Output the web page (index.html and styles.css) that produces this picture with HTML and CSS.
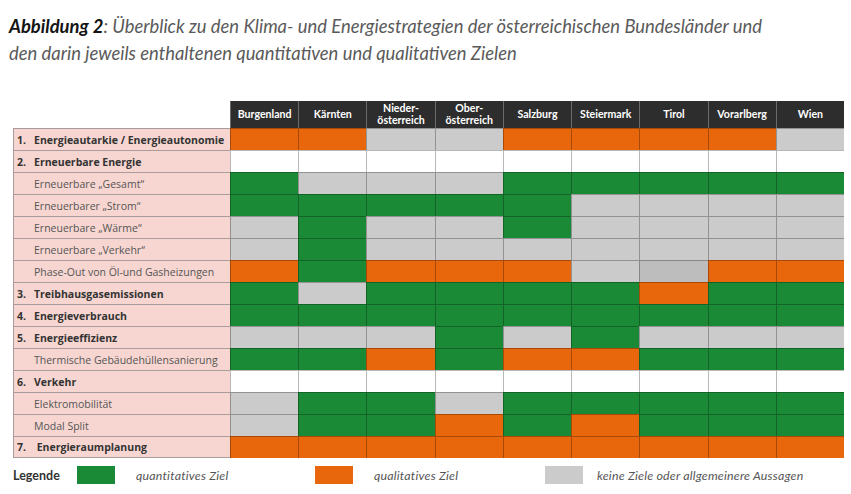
FILE: index.html
```html
<!DOCTYPE html>
<html lang="de">
<head>
<meta charset="utf-8">
<title>Abbildung 2</title>
<link rel="stylesheet" href="styles.css">
</head>
<body>
<p class="caption"><span class="caption-label">Abbildung 2</span>: Überblick zu den Klima- und Energiestrategien der österreichischen Bundesländer und<br>den darin jeweils enthaltenen quantitativen und qualitativen Zielen</p>

<div class="matrix">
  <div class="corner"></div>
  <div class="head">Burgenland</div>
  <div class="head">Kärnten</div>
  <div class="head two">Nieder-<br>österreich</div>
  <div class="head two">Ober-<br>österreich</div>
  <div class="head">Salzburg</div>
  <div class="head">Steiermark</div>
  <div class="head">Tirol</div>
  <div class="head">Vorarlberg</div>
  <div class="head">Wien</div>

  <div class="label main"><span class="num">1.</span>Energieautarkie / Energieautonomie</div>
  <div class="c o"></div><div class="c o"></div><div class="c y"></div><div class="c y"></div><div class="c o"></div><div class="c o"></div><div class="c o"></div><div class="c o"></div><div class="c y"></div>

  <div class="label main"><span class="num">2.</span>Erneuerbare Energie</div>
  <div class="c w"></div><div class="c w"></div><div class="c w"></div><div class="c w"></div><div class="c w"></div><div class="c w"></div><div class="c w"></div><div class="c w"></div><div class="c w"></div>

  <div class="label sub">Erneuerbare „Gesamt“</div>
  <div class="c g"></div><div class="c y"></div><div class="c y"></div><div class="c y"></div><div class="c g"></div><div class="c g"></div><div class="c g"></div><div class="c g"></div><div class="c g"></div>

  <div class="label sub">Erneuerbarer „Strom“</div>
  <div class="c g"></div><div class="c g"></div><div class="c g"></div><div class="c g"></div><div class="c g"></div><div class="c y"></div><div class="c y"></div><div class="c y"></div><div class="c y"></div>

  <div class="label sub">Erneuerbare „Wärme“</div>
  <div class="c y"></div><div class="c g"></div><div class="c y"></div><div class="c y"></div><div class="c g"></div><div class="c y"></div><div class="c y"></div><div class="c y"></div><div class="c y"></div>

  <div class="label sub">Erneuerbare „Verkehr“</div>
  <div class="c y"></div><div class="c g"></div><div class="c y"></div><div class="c y"></div><div class="c y"></div><div class="c y"></div><div class="c y"></div><div class="c y"></div><div class="c y"></div>

  <div class="label sub">Phase-Out von Öl-und Gasheizungen</div>
  <div class="c o"></div><div class="c g"></div><div class="c o"></div><div class="c o"></div><div class="c o"></div><div class="c y"></div><div class="c yd"></div><div class="c o"></div><div class="c o"></div>

  <div class="label main"><span class="num">3.</span>Treibhausgasemissionen</div>
  <div class="c g"></div><div class="c y"></div><div class="c g"></div><div class="c g"></div><div class="c g"></div><div class="c g"></div><div class="c o"></div><div class="c g"></div><div class="c g"></div>

  <div class="label main"><span class="num">4.</span>Energieverbrauch</div>
  <div class="c g"></div><div class="c g"></div><div class="c g"></div><div class="c g"></div><div class="c g"></div><div class="c g"></div><div class="c g"></div><div class="c g"></div><div class="c g"></div>

  <div class="label main"><span class="num">5.</span>Energieeffizienz</div>
  <div class="c y"></div><div class="c y"></div><div class="c y"></div><div class="c g"></div><div class="c y"></div><div class="c g"></div><div class="c y"></div><div class="c y"></div><div class="c y"></div>

  <div class="label sub">Thermische Gebäudehüllensanierung</div>
  <div class="c g"></div><div class="c g"></div><div class="c o"></div><div class="c g"></div><div class="c o"></div><div class="c o"></div><div class="c g"></div><div class="c g"></div><div class="c g"></div>

  <div class="label main"><span class="num">6.</span>Verkehr</div>
  <div class="c w"></div><div class="c w"></div><div class="c w"></div><div class="c w"></div><div class="c w"></div><div class="c w"></div><div class="c w"></div><div class="c w"></div><div class="c w"></div>

  <div class="label sub">Elektromobilität</div>
  <div class="c y"></div><div class="c g"></div><div class="c g"></div><div class="c y"></div><div class="c g"></div><div class="c g"></div><div class="c g"></div><div class="c g"></div><div class="c g"></div>

  <div class="label sub">Modal Split</div>
  <div class="c y"></div><div class="c g"></div><div class="c g"></div><div class="c o"></div><div class="c g"></div><div class="c o"></div><div class="c g"></div><div class="c g"></div><div class="c g"></div>

  <div class="label main last"><span class="num">7.</span>&nbsp;Energieraumplanung</div>
  <div class="c o"></div><div class="c o"></div><div class="c o"></div><div class="c o"></div><div class="c o"></div><div class="c o"></div><div class="c o"></div><div class="c o"></div><div class="c o"></div>
</div>

<div class="legend">
  <div class="legend-title">Legende</div>
  <div class="legend-item"><span class="swatch g"></span><span class="legend-text">quantitatives Ziel</span></div>
  <div class="legend-item"><span class="swatch o"></span><span class="legend-text">qualitatives Ziel</span></div>
  <div class="legend-item legend-item--tight"><span class="swatch y"></span><span class="legend-text">keine Ziele oder allgemeinere Aussagen</span></div>
</div>
</body>
</html>
```

FILE: styles.css
```css
* { box-sizing: border-box; }

html, body {
  margin: 0;
  padding: 0;
  background: #ffffff;
}

body {
  width: 851px;
  height: 494px;
  overflow: hidden;
  font-family: "Lato", "Open Sans", sans-serif;
}

.caption {
  margin: 0;
  padding: 13px 0 0 9px;
  font-family: "Lato", "Open Sans", sans-serif;
  font-style: italic;
  font-size: 18.4px;
  line-height: 27px;
  color: #5a5a5a;
}

.caption-label {
  color: #141414;
  font-weight: 700;
}

.matrix {
  display: grid;
  grid-template-columns: 217px repeat(9, 1fr);
  grid-template-rows: 27px repeat(15, 22px);
  width: 831px;
  margin: 34px 0 0 13px;
}

.corner { background: #ffffff; }

.head {
  display: flex;
  align-items: center;
  justify-content: center;
  text-align: center;
  background: #2d2d2d;
  color: #ffffff;
  font-family: "Lato", "Open Sans", sans-serif;
  font-weight: 700;
  font-size: 10.6px;
  line-height: 13px;
  border-left: 1px solid #6a6a6a;
  padding-bottom: 1px;
}

.head.two { line-height: 12.5px; }

.label {
  display: flex;
  align-items: center;
  background: #f7d6d1;
  border-top: 1px solid #a99d9b;
  border-left: 1px solid #a99d9b;
  padding-left: 20px;
  font-family: "Open Sans", sans-serif;
  font-size: 10.5px;
  color: #555555;
  white-space: nowrap;
}

.label.last { border-bottom: 1px solid #a99d9b; }

.label.main {
  padding-left: 3px;
  font-weight: 700;
  color: #333333;
}

.num {
  display: inline-block;
  width: 17px;
}

.c {
  border-top: 1px solid rgba(0, 0, 0, 0.28);
  border-left: 1px solid rgba(0, 0, 0, 0.28);
}

.g { background: #1b8a36; }
.o { background: #e8670c; }
.y { background: #cbcbcb; }
.yd { background: #bdbdbd; }
.w { background: #ffffff; }

.legend {
  display: grid;
  grid-template-columns: 64px 238px 230px auto;
  align-items: center;
  margin: 7px 0 0 13px;
  height: 20px;
}

.legend-title {
  font-family: "Lato", "Open Sans", sans-serif;
  font-weight: 700;
  font-size: 12.5px;
  color: #333333;
}

.legend-item {
  display: flex;
  align-items: center;
  gap: 21px;
}

.legend-item--tight { gap: 14px; }

.swatch {
  display: block;
  width: 38px;
  height: 18px;
}

.legend-text {
  font-family: "Lato", "Open Sans", sans-serif;
  font-style: italic;
  font-size: 12.4px;
  letter-spacing: 0.2px;
  color: #555555;
}
```
